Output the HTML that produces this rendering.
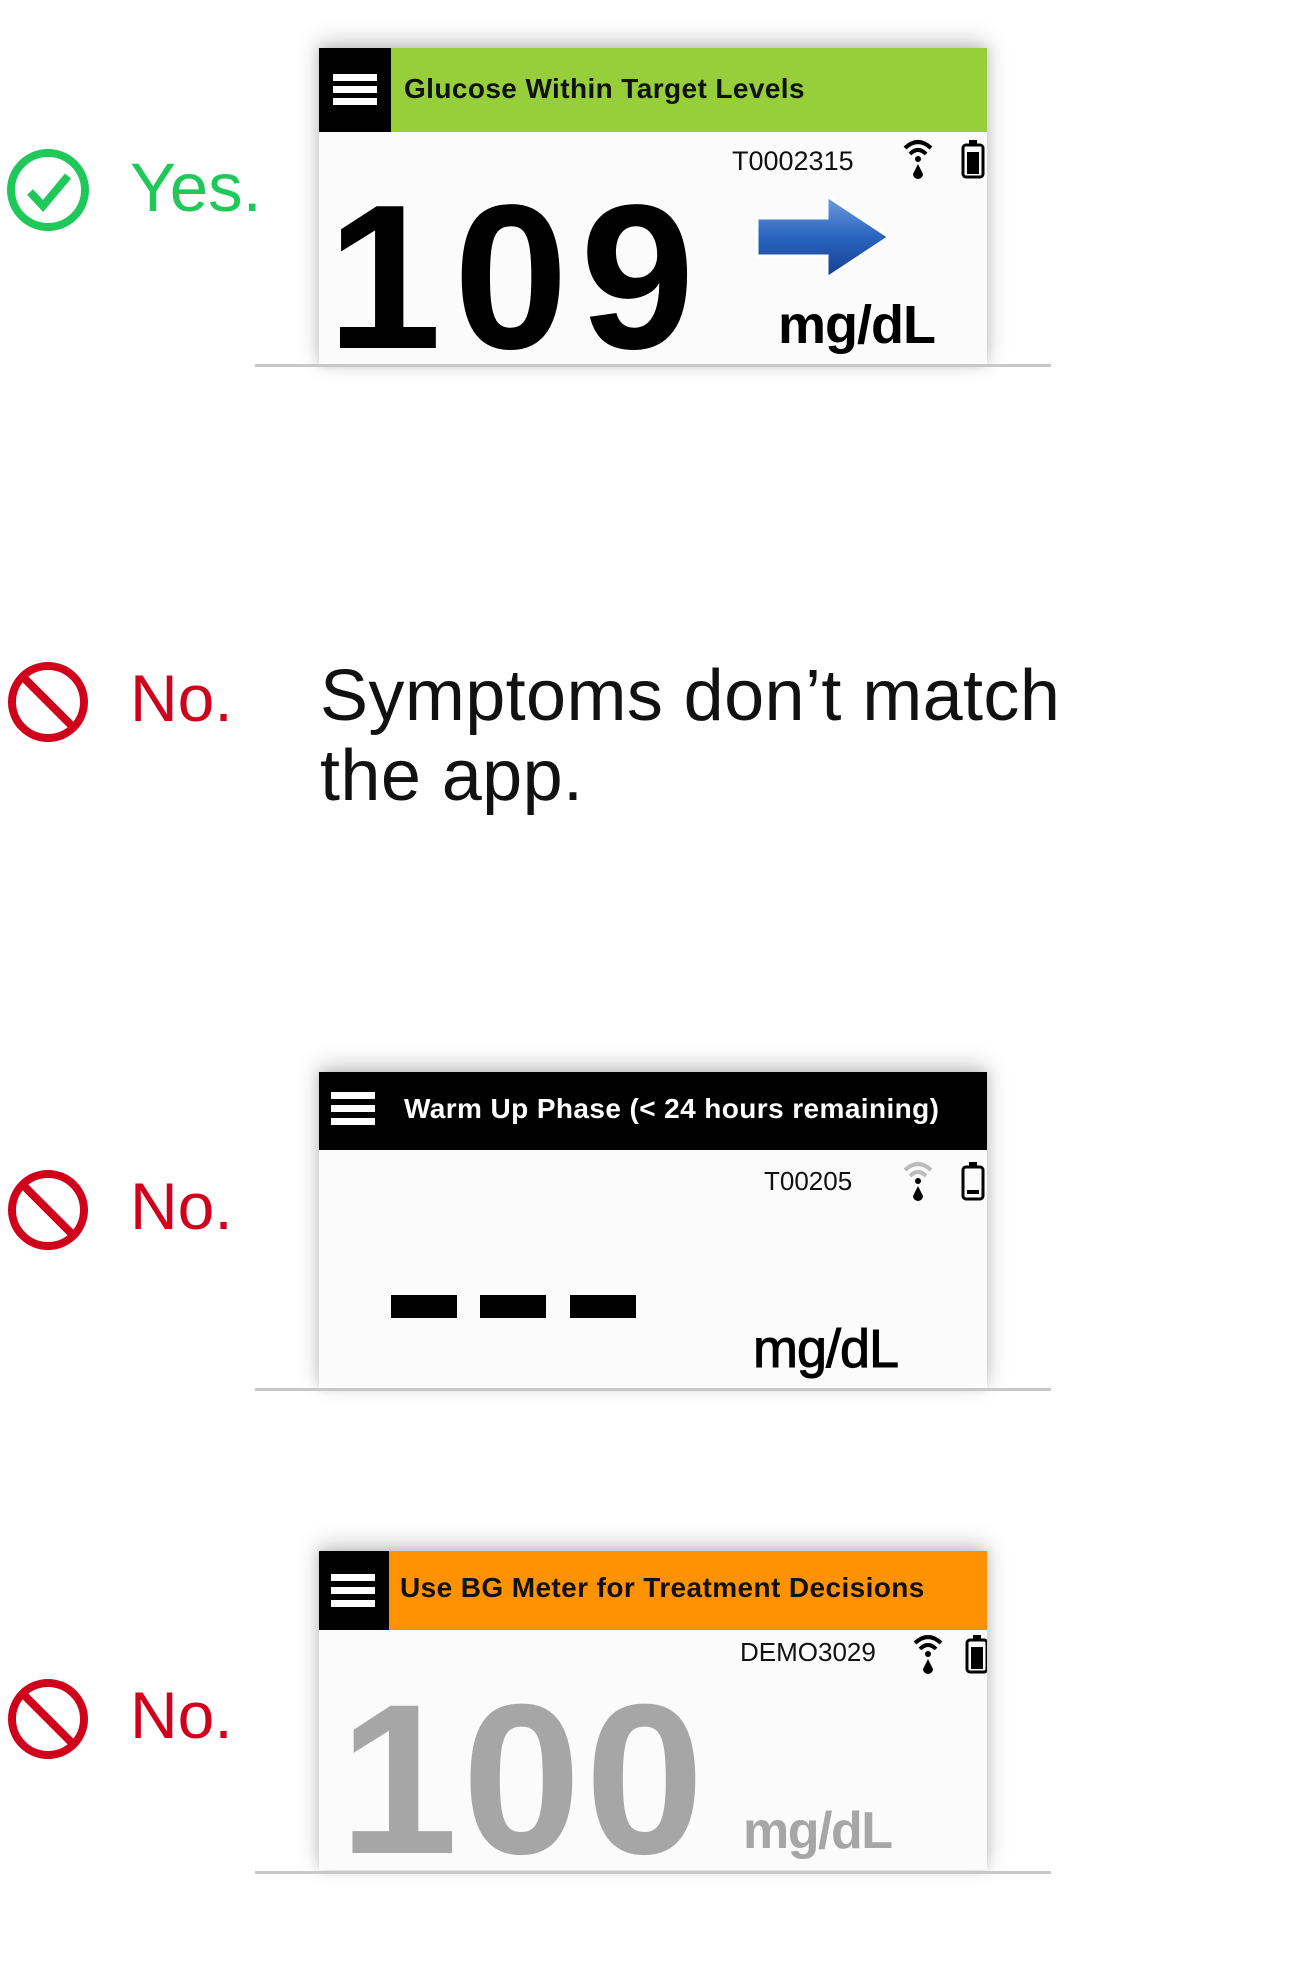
<!DOCTYPE html>
<html><head><meta charset="utf-8"><style>
body{margin:0;width:1312px;height:1970px;background:#fff;position:relative;overflow:hidden;font-family:"Liberation Sans",sans-serif}
.a{position:absolute;white-space:nowrap}
.card{position:absolute;left:319px;width:668px;background:#fbfbfb;box-shadow:0 -6px 22px rgba(0,0,0,.22),0 0 10px rgba(0,0,0,.12);overflow:hidden}
.hdr{position:absolute;left:0;top:0;width:668px}
.sq{position:absolute;left:0;top:0;background:#000}
.hb{position:absolute;left:14px;width:44px;height:7px;background:#fff}
.line{position:absolute;left:255px;width:796px;height:3px;background:#c8c8c8}
.lab{font-size:66px;color:#d0021b}
.ht{font-size:28px;font-weight:bold;letter-spacing:0.4px}
</style></head><body>

<svg class="a" style="left:6px;top:148px" width="86" height="86" viewBox="0 0 86 86"><circle cx="42" cy="42" r="37" fill="none" stroke="#1ec95a" stroke-width="8"/><path d="M24 44 L37 58 L62 28" fill="none" stroke="#1ec95a" stroke-width="8"/></svg>
<div class="a" style="left:130px;top:148px;font-size:69px;color:#1ec95a">Yes.</div>

<div class="card" style="top:48px;height:318px">
 <div class="hdr" style="height:84px;background:#96cf3a"></div>
 <div class="sq" style="width:72px;height:84px"><div class="hb" style="top:26px"></div><div class="hb" style="top:38px"></div><div class="hb" style="top:50px"></div></div>
 <div class="a ht" style="left:85px;top:25px;color:#111">Glucose Within Target Levels</div>
 <div class="a" style="left:413px;top:98px;font-size:27px;color:#111">T0002315</div>
 <svg class="a" style="left:582px;top:88px" width="86" height="46" viewBox="0 0 86 46"><path d="M4 12 Q17 0 30 12" fill="none" stroke="#000" stroke-width="4"/><path d="M9 18 Q17 10 25 18" fill="none" stroke="#000" stroke-width="4"/><circle cx="17" cy="23" r="3" fill="#000"/><path d="M17 28 L12 38 A5 5 0 0 0 22 38 Z" fill="#000"/><rect x="62" y="9" width="20" height="32" rx="3" fill="none" stroke="#000" stroke-width="3"/><rect x="68" y="4" width="8" height="6" fill="#000"/><rect x="66" y="16" width="12" height="22" fill="#000"/></svg>
 <div class="a" style="left:8px;top:126px;font-size:206px;font-weight:bold;color:#000;letter-spacing:12px;line-height:206px">109</div>
 <svg class="a" style="left:434px;top:144px" width="144" height="90" viewBox="0 0 144 90"><defs><linearGradient id="g" x1="0" y1="0" x2="0" y2="1"><stop offset="0" stop-color="#6f9ee0"/><stop offset=".5" stop-color="#2a64c0"/><stop offset="1" stop-color="#143f8e"/></linearGradient></defs><path d="M4 26 L74 26 L74 4 L136 45 L74 86 L74 64 L4 64 Z" fill="url(#g)" stroke="#fff" stroke-width="3"/></svg>
 <div class="a" style="left:459px;top:246px;font-size:54px;font-weight:bold;color:#000;letter-spacing:-1px">mg/dL</div>
</div>
<div class="line" style="top:364px"></div>

<svg class="a" style="left:6px;top:660px" width="86" height="86" viewBox="0 0 86 86"><circle cx="42" cy="42" r="36" fill="none" stroke="#d0021b" stroke-width="8"/><line x1="17" y1="17" x2="67" y2="67" stroke="#d0021b" stroke-width="8"/></svg>
<div class="a lab" style="left:130px;top:660px">No.</div>
<div class="a" style="left:320px;top:656px;font-size:72px;color:#111;line-height:80px;letter-spacing:0.4px">Symptoms don’t match<br>the app.</div>

<svg class="a" style="left:6px;top:1168px" width="86" height="86" viewBox="0 0 86 86"><circle cx="42" cy="42" r="36" fill="none" stroke="#d0021b" stroke-width="8"/><line x1="17" y1="17" x2="67" y2="67" stroke="#d0021b" stroke-width="8"/></svg>
<div class="a lab" style="left:130px;top:1168px">No.</div>
<div class="card" style="top:1072px;height:316px">
 <div class="hdr" style="height:78px;background:#000"></div>
 <div class="hb" style="top:20px;left:12px"></div><div class="hb" style="top:33px;left:12px"></div><div class="hb" style="top:46px;left:12px"></div>
 <div class="a ht" style="left:85px;top:21px;color:#fff">Warm Up Phase (&lt; 24 hours remaining)</div>
 <div class="a" style="left:445px;top:94px;font-size:26px;color:#111">T00205</div>
 <svg class="a" style="left:582px;top:86px" width="86" height="46" viewBox="0 0 86 46"><path d="M4 12 Q17 0 30 12" fill="none" stroke="#bbb" stroke-width="4"/><path d="M9 18 Q17 10 25 18" fill="none" stroke="#bbb" stroke-width="4"/><circle cx="17" cy="23" r="3" fill="#000"/><path d="M17 28 L12 38 A5 5 0 0 0 22 38 Z" fill="#000"/><rect x="62" y="9" width="20" height="32" rx="3" fill="none" stroke="#000" stroke-width="3"/><rect x="68" y="4" width="8" height="6" fill="#000"/><rect x="66" y="32" width="12" height="4" fill="#000"/></svg>
 <div class="a" style="left:72px;top:223px;width:66px;height:23px;background:#000"></div>
 <div class="a" style="left:161px;top:223px;width:66px;height:23px;background:#000"></div>
 <div class="a" style="left:251px;top:223px;width:66px;height:23px;background:#000"></div>
 <div class="a" style="left:434px;top:246px;font-size:54px;color:#000;letter-spacing:-1px;-webkit-text-stroke:1px #000">mg/dL</div>
</div>
<div class="line" style="top:1382px;top:1388px"></div>

<svg class="a" style="left:6px;top:1677px" width="86" height="86" viewBox="0 0 86 86"><circle cx="42" cy="42" r="36" fill="none" stroke="#d0021b" stroke-width="8"/><line x1="17" y1="17" x2="67" y2="67" stroke="#d0021b" stroke-width="8"/></svg>
<div class="a lab" style="left:130px;top:1677px">No.</div>
<div class="card" style="top:1551px;height:319px">
 <div class="hdr" style="height:79px;background:#ff9200"></div>
 <div class="sq" style="width:70px;height:79px"><div class="hb" style="top:23px;left:12px"></div><div class="hb" style="top:36px;left:12px"></div><div class="hb" style="top:49px;left:12px"></div></div>
 <div class="a ht" style="left:81px;top:21px;color:#111">Use BG Meter for Treatment Decisions</div>
 <div class="a" style="left:421px;top:86px;font-size:26px;color:#111">DEMO3029</div>
 <svg class="a" style="left:592px;top:80px" width="86" height="46" viewBox="0 0 86 46"><path d="M4 12 Q17 0 30 12" fill="none" stroke="#000" stroke-width="4"/><path d="M9 18 Q17 10 25 18" fill="none" stroke="#000" stroke-width="4"/><circle cx="17" cy="23" r="3" fill="#000"/><path d="M17 28 L12 38 A5 5 0 0 0 22 38 Z" fill="#000"/><rect x="56" y="9" width="20" height="32" rx="3" fill="none" stroke="#000" stroke-width="3"/><rect x="62" y="4" width="8" height="6" fill="#000"/><rect x="60" y="16" width="12" height="22" fill="#000"/></svg>
 <div class="a" style="left:20px;top:122px;font-size:214px;font-weight:bold;color:#a6a6a6;letter-spacing:4px;line-height:214px">100</div>
 <div class="a" style="left:424px;top:250px;font-size:52px;font-weight:bold;color:#a6a6a6;letter-spacing:-1.5px">mg/dL</div>
</div>
<div class="line" style="top:1871px"></div>
</body></html>
